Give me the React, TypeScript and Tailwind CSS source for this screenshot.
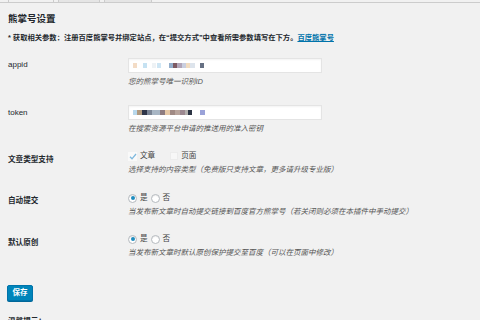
import React from "react";

const FONT = { fontFamily: '"Liberation Sans", "Noto Sans CJK SC", sans-serif' };

const appidBlocks: [number, number, string][] = [
  [133, 4, "#f3dcc6"],
  [143, 4, "#c6e2f2"],
  [152, 4, "#eef2f5"],
  [157, 4, "#cfe6f4"],
  [169, 4, "#93aecb"],
  [173, 4, "#7d5a63"],
  [177, 5, "#b1a5b8"],
  [182, 4, "#c9cedf"],
  [186, 4, "#f1dcc0"],
  [190, 5, "#dde4ec"],
  [200, 4, "#667083"],
];

const tokenBlocks: [number, number, string][] = [
  [133, 4, "#b8d8ec"],
  [137, 5, "#b09a80"],
  [142, 5, "#2e3548"],
  [147, 5, "#7a8494"],
  [152, 8, "#a8b6c4"],
  [160, 5, "#8e7c80"],
  [165, 5, "#e6c8a6"],
  [170, 5, "#a08a84"],
  [175, 5, "#b8a49c"],
  [180, 5, "#9c8890"],
  [185, 3, "#b4b0ae"],
  [188, 4, "#2c3444"],
  [200, 5, "#9aa2d8"],
];

function Mosaic({ blocks }: { blocks: [number, number, string][] }) {
  return (
    <svg width="80" height="5" className="ml-[4px] block">
      {blocks.map(([x, w, c], i) => (
        <rect key={i} x={x - 133} y={0} width={w} height={5} fill={c} />
      ))}
    </svg>
  );
}

function Label({ children, pt }: { children: React.ReactNode; pt: string }) {
  return (
    <div className={`w-[120px] shrink-0 text-[7.6px] leading-[10px] font-semibold text-[#23282d] ${pt}`}>
      {children}
    </div>
  );
}

function Desc({ children }: { children: React.ReactNode }) {
  return <div className="mt-[4px] text-[7.5px] leading-[10px] italic text-[#555]">{children}</div>;
}

function Radio({ checked }: { checked?: boolean }) {
  return (
    <span className="w-[9px] h-[9px] rounded-full bg-white border border-[#b4b9be] flex items-center justify-center shadow-[inset_0_1px_1px_rgba(0,0,0,0.08)]">
      {checked && <span className="w-[4px] h-[4px] rounded-full bg-[#1e8cbe]" />}
    </span>
  );
}

export default function App() {
  return (
    <div className="w-[480px] h-[320px] bg-[#f1f1f1] overflow-hidden relative" style={FONT}>
      {/* tabs */}
      <div className="h-[3px] flex items-end border-b border-[#cccccc] overflow-hidden">
        <div className="ml-[8px] w-[46px] h-[10px] border-l border-r border-[#cccccc] bg-[#f1f1f1] -mb-px" />
        <div className="ml-[4px] w-[42px] h-[10px] border border-[#cccccc] bg-[#e5e5e5] -mb-px" />
        <div className="ml-[4px] w-[48px] h-[10px] border border-[#cccccc] bg-[#e5e5e5] -mb-px" />
      </div>

      <div className="pl-[8px]">
        <div className="mt-[10px] text-[9.5px] leading-[12px] font-bold text-[#23282d]">熊掌号设置</div>
        <div className="mt-[8px] text-[7.3px] leading-[10px] font-semibold text-[#23282d] whitespace-nowrap">
          * 获取相关参数：注册百度熊掌号并绑定站点，在“提交方式”中查看所需参数填写在下方。
          <span className="text-[#0073aa] underline">百度熊掌号</span>
        </div>

        {/* appid */}
        <div className="flex mt-[15px]">
          <Label pt="pt-[2px]">
            <span className="text-[8px] font-normal">appid</span>
          </Label>
          <div>
            <div className="w-[194px] h-[15px] bg-white border border-[#e4e4e4] flex items-center shadow-[inset_0_1px_2px_rgba(0,0,0,0.05)]">
              <Mosaic blocks={appidBlocks} />
            </div>
            <Desc>您的熊掌号唯一识别ID</Desc>
          </div>
        </div>

        {/* token */}
        <div className="flex mt-[18px]">
          <Label pt="pt-[2.5px]">
            <span className="text-[8px] font-normal">token</span>
          </Label>
          <div>
            <div className="w-[194px] h-[15px] bg-white border border-[#e4e4e4] flex items-center shadow-[inset_0_1px_2px_rgba(0,0,0,0.05)]">
              <Mosaic blocks={tokenBlocks} />
            </div>
            <Desc>在搜索资源平台申请的推送用的准入密钥</Desc>
          </div>
        </div>

        {/* 文章类型支持 */}
        <div className="flex mt-[17px]">
          <Label pt="pt-[4px]">文章类型支持</Label>
          <div>
            <div className="flex items-center h-[10px] text-[7.6px] text-[#444]">
              <span className="w-[9px] h-[9px] bg-[#f9f9f9] flex items-center justify-center">
                <svg width="8" height="7" viewBox="0 0 8 7">
                  <path d="M1 3.8 L3 5.8 L7 1" stroke="#7fb9de" strokeWidth="1.3" fill="none" />
                </svg>
              </span>
              <span className="ml-[3px]">文章</span>
              <span className="ml-[15px] w-[8px] h-[8px] bg-[#f7f7f7] border border-[#ececec]" />
              <span className="ml-[3px]">页面</span>
            </div>
            <Desc>选择支持的内容类型（免费版只支持文章，更多请升级专业版）</Desc>
          </div>
        </div>

        {/* 自动提交 */}
        <div className="flex mt-[18px]">
          <Label pt="pt-[3px]">自动提交</Label>
          <div>
            <div className="flex items-center h-[10px] text-[7.6px] text-[#444]">
              <Radio checked />
              <span className="ml-[3px]">是</span>
              <span className="ml-[3px]">
                <Radio />
              </span>
              <span className="ml-[3px]">否</span>
            </div>
            <Desc>当发布新文章时自动提交链接到百度官方熊掌号（若关闭则必须在本插件中手动提交）</Desc>
          </div>
        </div>

        {/* 默认原创 */}
        <div className="flex mt-[17px]">
          <Label pt="pt-[4px]">默认原创</Label>
          <div>
            <div className="flex items-center h-[10px] text-[7.6px] text-[#444]">
              <Radio checked />
              <span className="ml-[3px]">是</span>
              <span className="ml-[3px]">
                <Radio />
              </span>
              <span className="ml-[3px]">否</span>
            </div>
            <Desc>当发布新文章时默认原创保护提交至百度（可以在页面中修改）</Desc>
          </div>
        </div>

        <div className="mt-[20px]">
          <button className="w-[26px] h-[16px] -ml-px bg-[#0085ba] border border-[#0073aa] rounded-[2px] text-white text-[7.5px] font-bold leading-none shadow-[0_1px_0_#006799]">
            保存
          </button>
        </div>

        <div className="mt-[15px] text-[7.6px] leading-[10px] font-semibold text-[#23282d]">温馨提示：</div>
      </div>
    </div>
  );
}
